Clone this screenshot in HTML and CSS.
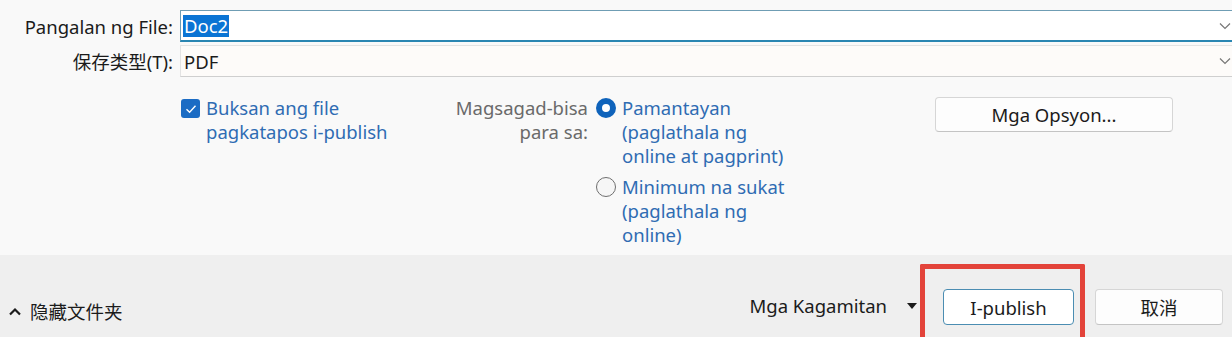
FILE: index.html
```html
<!DOCTYPE html>
<html lang="fil">
<head>
    <meta charset="UTF-8">
    <meta name="viewport" content="width=device-width, initial-scale=1.0">
    <title>I-publish bilang PDF</title>
    <link rel="stylesheet" href="styles.css">
</head>
<body>
    <div class="dialog">
        <div class="form">
            <div class="field-row">
                <label class="field-label">Pangalan ng File:</label>
                <div class="field focused">
                    <span class="selected">Doc2</span>
                    <svg class="chev" width="12" height="8" viewBox="0 0 12 8"><path d="M1 1.5 L6 6.5 L11 1.5" fill="none" stroke="#777" stroke-width="1.2"/></svg>
                </div>
            </div>
            <div class="field-row">
                <label class="field-label">保存类型(T):</label>
                <div class="field plain">
                    <span>PDF</span>
                    <svg class="chev" width="12" height="8" viewBox="0 0 12 8"><path d="M1 1.5 L6 6.5 L11 1.5" fill="none" stroke="#777" stroke-width="1.2"/></svg>
                </div>
            </div>

            <div class="options">
                <div class="check-opt">
                    <span class="checkbox">
                        <svg width="12" height="10" viewBox="0 0 12 10"><path d="M1.5 5.2 L4.6 8.2 L10.5 1.8" fill="none" stroke="#fff" stroke-width="1.4"/></svg>
                    </span>
                    <span class="opt-text">Buksan ang file<br>pagkatapos i-publish</span>
                </div>

                <div class="optimize">
                    <div class="opt-label">Magsagad-bisa<br>para sa:</div>
                    <div class="radios">
                        <div class="radio-row">
                            <span class="radio on"></span>
                            <span class="opt-text">Pamantayan<br>(paglathala ng<br>online at pagprint)</span>
                        </div>
                        <div class="radio-row">
                            <span class="radio"></span>
                            <span class="opt-text">Minimum na sukat<br>(paglathala ng<br>online)</span>
                        </div>
                    </div>
                </div>

                <button class="btn options-btn">Mga Opsyon...</button>
            </div>
        </div>

        <div class="footer">
            <div class="hide-folders">
                <svg width="14" height="9" viewBox="0 0 14 9"><path d="M2 7.5 L7 2.5 L12 7.5" fill="none" stroke="#1b1b1b" stroke-width="2.2"/></svg>
                <span>隐藏文件夹</span>
            </div>
            <div class="tools">
                <span>Mga Kagamitan</span>
                <svg width="10" height="6" viewBox="0 0 10 6"><path d="M0 0 H10 L5 6 Z" fill="#1b1b1b"/></svg>
            </div>
            <div class="publish-wrap">
                <button class="btn primary">I-publish</button>
                <span class="highlight"></span>
            </div>
            <button class="btn cancel">取消</button>
        </div>
    </div>
</body>
</html>
```

FILE: styles.css
```css
html, body {
    margin: 0;
    height: 337px;
    overflow: hidden;
}
body {
    font-family: "Noto Sans", "Noto Sans CJK SC", sans-serif;
    font-size: 18.5px;
    color: #1b1b1b;
    background-color: #efefef;
}
.dialog {
    width: 1232px;
}
.form {
    height: 255px;
    box-sizing: border-box;
    padding-top: 10px;
    background-color: #f9f9f9;
}
.field-row {
    display: grid;
    grid-template-columns: 173px 1fr;
    column-gap: 7px;
    align-items: center;
    margin-bottom: 3px;
    margin-right: -12px;
}
.field-label {
    text-align: right;
    white-space: nowrap;
}
.field {
    height: 32px;
    box-sizing: border-box;
    display: flex;
    align-items: center;
    justify-content: space-between;
    padding: 0 12px 0 2px;
}
.field.focused {
    background-color: #fff;
    border: 1px solid #6f9db4;
    border-bottom: 2px solid #2a86b2;
}
.field.plain {
    background-color: #fdfbf9;
    border: 1px solid #e3e3e3;
    border-bottom-color: #cfcfcf;
    padding-left: 3px;
}
.selected {
    background-color: #0a74d4;
    color: #fff;
    padding: 0 1px;
    line-height: 22px;
}
.options {
    display: flex;
    align-items: flex-start;
    margin-top: 19px;
    padding: 0 59px 0 181px;
    line-height: 24px;
}
.opt-text {
    color: #2f6cb3;
}
.check-opt {
    display: flex;
    align-items: flex-start;
    width: 272px;
}
.checkbox {
    width: 19px;
    height: 19px;
    margin: 3px 6px 0 0;
    border-radius: 3px;
    background-color: #1b6cc4;
    display: flex;
    align-items: center;
    justify-content: center;
    flex-shrink: 0;
}
.optimize {
    display: flex;
    align-items: flex-start;
}
.opt-label {
    width: 135px;
    text-align: right;
    color: #6a6a6a;
    white-space: nowrap;
}
.radios {
    margin-left: 8px;
}
.radio-row {
    display: flex;
    align-items: flex-start;
    margin-bottom: 7px;
}
.radio {
    width: 20px;
    height: 20px;
    box-sizing: border-box;
    border-radius: 50%;
    margin: 2px 6px 0 0;
    border: 1px solid #6f6f6f;
    background-color: #f6f6f6;
    flex-shrink: 0;
}
.radio.on {
    border: 6px solid #0f63bb;
    background-color: #fff;
}
.btn {
    font-family: inherit;
    font-size: 18.5px;
    color: #1b1b1b;
    background-color: #fdfdfd;
    border: 1px solid #d6d6d6;
    border-bottom-color: #c4c4c4;
    border-radius: 4px;
    cursor: pointer;
}
.options-btn {
    margin: 1px 0 0 auto;
    width: 238px;
    height: 35px;
}
.footer {
    height: 82px;
    display: flex;
    align-items: flex-start;
    padding: 34px 9px 0 8px;
    box-sizing: border-box;
}
.hide-folders {
    display: flex;
    align-items: center;
    gap: 8px;
    margin-top: 9px;
}
.tools {
    margin: 4px 0 0 auto;
    display: flex;
    align-items: center;
    gap: 20px;
}
.publish-wrap {
    position: relative;
    margin-left: 26px;
}
.primary {
    width: 131px;
    height: 36px;
    background-color: #fff;
    border: 1px solid #4b8db2;
}
.highlight {
    position: absolute;
    left: -23px;
    top: -25px;
    width: 165px;
    height: 73px;
    box-sizing: border-box;
    border: 5px solid #e3433a;
    border-bottom: none;
    border-radius: 2px 2px 0 0;
}
.cancel {
    margin-left: 21px;
    width: 128px;
    height: 36px;
}
```
